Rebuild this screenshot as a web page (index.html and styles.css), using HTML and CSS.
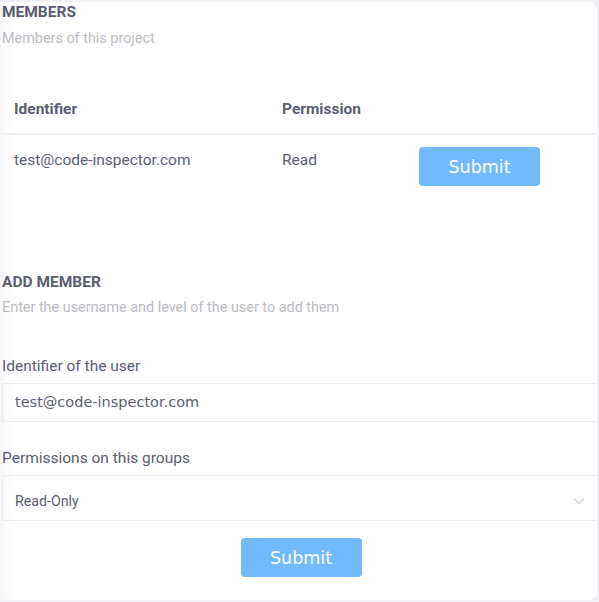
FILE: index.html
```html
<!DOCTYPE html>
<html>
<head>
<meta charset="utf-8">
<link rel="stylesheet" href="styles.css">
</head>
<body>
<div class="card">
  <section class="section">
    <h2 class="title">MEMBERS</h2>
    <p class="subtitle">Members of this project</p>
    <table class="table">
      <thead>
        <tr><th class="c1">Identifier</th><th class="c2">Permission</th><th class="c3"></th></tr>
      </thead>
      <tbody>
        <tr><td class="c1">test@code-inspector.com</td><td class="c2">Read</td><td class="c3"><button class="btn">Submit</button></td></tr>
      </tbody>
    </table>
  </section>
  <section class="section add">
    <h2 class="title">ADD MEMBER</h2>
    <p class="subtitle">Enter the username and level of the user to add them</p>
    <label class="label">Identifier of the user</label>
    <div class="input">test@code-inspector.com</div>
    <label class="label">Permissions on this groups</label>
    <div class="select"><span>Read-Only</span>
      <svg class="chev" width="12" height="8" viewBox="0 0 12 8"><path d="M1 1.5 L6 6.5 L11 1.5" fill="none" stroke="#d8d8dc" stroke-width="1.6"/></svg>
    </div>
    <div class="actions"><button class="btn">Submit</button></div>
  </section>
</div>
</body>
</html>
```
FILE: styles.css
```css
html, body { margin: 0; padding: 0; }
body {
  background: #f1f1f5;
  font-family: Roboto, "Liberation Sans", sans-serif;
  width: 599px;
  height: 602px;
  overflow: hidden;
}
.card {
  margin: 2px 2px 0 0;
  height: 598px;
  background: #fff;
  border-radius: 0 8px 8px 0;
  box-shadow: inset 12px 0 12px -8px #f3f3f6;
  box-sizing: border-box;
}
.section { padding: 0 0 0 2px; }
.title {
  margin: 0;
  padding-top: 0;
  font-size: 15.5px;
  font-weight: 700;
  color: #5b5e70;
  line-height: 20px;
}
.subtitle {
  margin: 8px 0 0;
  font-size: 14.4px;
  color: #bcbcc2;
  line-height: 18px;
}
.add .subtitle { margin-top: 7px; }
.table {
  margin-top: 51px;
  width: 100%;
  border-collapse: collapse;
}
.table th {
  text-align: left;
  font-size: 15.5px;
  font-weight: 700;
  color: #5b5e70;
  padding: 0 12px 14px;
  line-height: 20px;
  border-bottom: 2px solid #efeff4;
}
.table td {
  vertical-align: top;
  padding: 15px 12px 0;
  font-size: 15.5px;
  line-height: 20px;
  color: #5b5e70;
}
.table td.c3 { padding-top: 12px; }
.c1 { width: 244px; }
.c2 { width: 113px; }
.btn {
  font-family: "DejaVu Sans", sans-serif;
  font-size: 17.5px;
  color: #fff;
  background: #72bafe;
  border: none;
  border-radius: 4px;
  width: 121px;
  height: 39px;
  padding: 0;
}
.add { padding-top: 86px; }
.label {
  display: block;
  margin-top: 39px;
  font-size: 15.5px;
  color: #5b5e70;
  line-height: 20px;
}
.input {
  margin-top: 7px;
  height: 37px;
  border: 1px solid #ededf1;
  border-right: none;
  padding-left: 12px;
  font-family: "DejaVu Sans", sans-serif;
  font-size: 14.5px;
  color: #5b5e70;
  line-height: 37px;
}
.add .input + .label { margin-top: 26px; }
.select {
  margin-top: 7px;
  height: 44px;
  border: 1px solid #ededf1;
  border-right: none;
  padding: 5px 12px 0 12px;
  box-sizing: content-box;
  height: 39px;
  display: flex;
  align-items: center;
  justify-content: space-between;
  font-size: 14.2px;
  color: #5b5e70;
}
.actions {
  display: flex;
  justify-content: center;
  padding-top: 17px;
  padding-left: 3px;
}
```
